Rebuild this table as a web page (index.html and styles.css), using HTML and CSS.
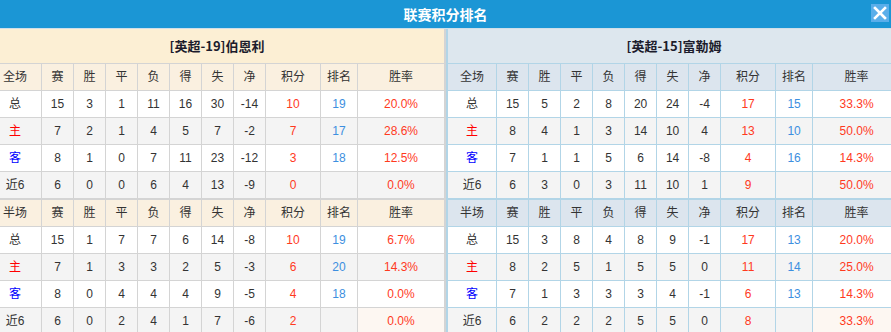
FILE: index.html
```html
<!DOCTYPE html>
<html lang="zh-CN">
<head>
<meta charset="utf-8">
<title>联赛积分排名</title>
<link rel="stylesheet" href="styles.css">
</head>
<body>
<div class="panel">
  <div class="titlebar">
    <span class="title">联赛积分排名</span>
    <span class="close" aria-label="关闭">
      <svg width="18" height="18" viewBox="0 0 18 18"><path d="M4 4 L14 14 M14 4 L4 14" stroke="#fff" stroke-width="2.6" stroke-linecap="square" fill="none"/></svg>
    </span>
  </div>
  <div class="tables">
    <table class="standings home">
      <colgroup><col class="c-label"><col class="c-num"><col class="c-num"><col class="c-num"><col class="c-num"><col class="c-num"><col class="c-num"><col class="c-num"><col class="c-pts"><col class="c-rank"><col class="c-rate"></colgroup>
      <tr class="team-row"><th colspan="11" class="team">[英超-19]伯恩利</th></tr>
      <tr class="head"><th>全场</th><th>赛</th><th>胜</th><th>平</th><th>负</th><th>得</th><th>失</th><th>净</th><th>积分</th><th>排名</th><th>胜率</th></tr>
      <tr><td>总</td><td>15</td><td>3</td><td>1</td><td>11</td><td>16</td><td>30</td><td>-14</td><td class="pts">10</td><td class="rank">19</td><td class="rate">20.0%</td></tr>
      <tr class="alt"><td class="h">主</td><td>7</td><td>2</td><td>1</td><td>4</td><td>5</td><td>7</td><td>-2</td><td class="pts">7</td><td class="rank">17</td><td class="rate">28.6%</td></tr>
      <tr><td class="a">客</td><td>8</td><td>1</td><td>0</td><td>7</td><td>11</td><td>23</td><td>-12</td><td class="pts">3</td><td class="rank">18</td><td class="rate">12.5%</td></tr>
      <tr class="alt"><td>近6</td><td>6</td><td>0</td><td>0</td><td>6</td><td>4</td><td>13</td><td>-9</td><td class="pts">0</td><td class="rank"></td><td class="rate">0.0%</td></tr>
      <tr class="head sec"><th>半场</th><th>赛</th><th>胜</th><th>平</th><th>负</th><th>得</th><th>失</th><th>净</th><th>积分</th><th>排名</th><th>胜率</th></tr>
      <tr><td>总</td><td>15</td><td>1</td><td>7</td><td>7</td><td>6</td><td>14</td><td>-8</td><td class="pts">10</td><td class="rank">19</td><td class="rate">6.7%</td></tr>
      <tr class="alt"><td class="h">主</td><td>7</td><td>1</td><td>3</td><td>3</td><td>2</td><td>5</td><td>-3</td><td class="pts">6</td><td class="rank">20</td><td class="rate">14.3%</td></tr>
      <tr><td class="a">客</td><td>8</td><td>0</td><td>4</td><td>4</td><td>4</td><td>9</td><td>-5</td><td class="pts">4</td><td class="rank">18</td><td class="rate">0.0%</td></tr>
      <tr class="alt"><td>近6</td><td>6</td><td>0</td><td>2</td><td>4</td><td>1</td><td>7</td><td>-6</td><td class="pts">2</td><td class="rank"></td><td class="rate hl">0.0%</td></tr>
    </table>
    <table class="standings away">
      <colgroup><col class="c-label2"><col class="c-num"><col class="c-num"><col class="c-num"><col class="c-num"><col class="c-num"><col class="c-num"><col class="c-num"><col class="c-pts"><col class="c-rank"><col class="c-rate"></colgroup>
      <tr class="team-row"><th colspan="11" class="team">[英超-15]富勒姆</th></tr>
      <tr class="head"><th>全场</th><th>赛</th><th>胜</th><th>平</th><th>负</th><th>得</th><th>失</th><th>净</th><th>积分</th><th>排名</th><th>胜率</th></tr>
      <tr><td>总</td><td>15</td><td>5</td><td>2</td><td>8</td><td>20</td><td>24</td><td>-4</td><td class="pts">17</td><td class="rank">15</td><td class="rate">33.3%</td></tr>
      <tr class="alt"><td class="h">主</td><td>8</td><td>4</td><td>1</td><td>3</td><td>14</td><td>10</td><td>4</td><td class="pts">13</td><td class="rank">10</td><td class="rate">50.0%</td></tr>
      <tr><td class="a">客</td><td>7</td><td>1</td><td>1</td><td>5</td><td>6</td><td>14</td><td>-8</td><td class="pts">4</td><td class="rank">16</td><td class="rate">14.3%</td></tr>
      <tr class="alt"><td>近6</td><td>6</td><td>3</td><td>0</td><td>3</td><td>11</td><td>10</td><td>1</td><td class="pts">9</td><td class="rank"></td><td class="rate">50.0%</td></tr>
      <tr class="head sec"><th>半场</th><th>赛</th><th>胜</th><th>平</th><th>负</th><th>得</th><th>失</th><th>净</th><th>积分</th><th>排名</th><th>胜率</th></tr>
      <tr><td>总</td><td>15</td><td>3</td><td>8</td><td>4</td><td>8</td><td>9</td><td>-1</td><td class="pts">17</td><td class="rank">13</td><td class="rate">20.0%</td></tr>
      <tr class="alt"><td class="h">主</td><td>8</td><td>2</td><td>5</td><td>1</td><td>5</td><td>5</td><td>0</td><td class="pts">11</td><td class="rank">14</td><td class="rate">25.0%</td></tr>
      <tr><td class="a">客</td><td>7</td><td>1</td><td>3</td><td>3</td><td>3</td><td>4</td><td>-1</td><td class="pts">6</td><td class="rank">13</td><td class="rate">14.3%</td></tr>
      <tr class="alt"><td>近6</td><td>6</td><td>2</td><td>2</td><td>2</td><td>5</td><td>5</td><td>0</td><td class="pts">8</td><td class="rank"></td><td class="rate hl">33.3%</td></tr>
    </table>
  </div>
</div>
</body>
</html>
```
FILE: styles.css
```css
html, body {
  margin: 0;
  padding: 0;
  background: #fff;
  overflow: hidden;
}
body {
  font-family: "Liberation Sans", "Noto Sans CJK SC", sans-serif;
  font-size: 12px;
  color: #333;
}
.panel {
  width: 891px;
  overflow: hidden;
}
.titlebar {
  position: relative;
  height: 28px;
  background: #1b96d5;
  border-bottom: 1px solid #cfdfe9;
  display: flex;
  align-items: center;
  justify-content: center;
}
.title {
  color: #fff;
  font-weight: bold;
  font-size: 14px;
  font-family: "Noto Sans CJK SC", sans-serif;
  line-height: 28px;
}
.close {
  position: absolute;
  right: 2px;
  top: 4px;
  width: 18px;
  height: 18px;
  background: #5aaeea;
  display: block;
}
.close svg { display: block; }
.tables {
  display: flex;
  width: 901px;
}
.standings {
  border-collapse: separate;
  border-spacing: 0;
  table-layout: fixed;
  flex: none;
}
.home { width: 446px; }
.away { width: 455px; }
.c-label { width: 42px; }
.c-label2 { width: 51px; }
.c-num { width: 32px; }
.c-pts { width: 55px; }
.c-rank { width: 37px; }
.c-rate { width: 88px; }
.standings th, .standings td {
  padding: 0;
  text-align: center;
  font-weight: normal;
  white-space: nowrap;
  border-right: 1px solid #d4d4d4;
  border-bottom: 1px solid #d4d4d4;
  line-height: 16px;
}
.standings tr { height: 27px; }
.standings .team-row { height: 35px; }
.standings th.team {
  font-weight: bold;
  font-size: 13px;
  color: #1c1c2c;
  font-family: "Noto Sans CJK SC", sans-serif;
}
.home .team-row th { background: #fcefd4; padding-right: 10px; }
.home .head th { background: #faf0e0; color: #333; }
.home tr > :last-child { border-right-width: 2px; }
.home tr:not(.team-row) > :first-child { padding-right: 11px; }
.away th, .away td { border-color: #b2d5e7; }
.away tr > :first-child { border-left: 2px solid #b2d5e7; }
.away .team-row th { background: #dde7ee; }
.away .head th { background: #dce5ee; color: #333; }
.standings .head.sec th { border-top: 1px solid #d4d4d4; }
.away .head.sec th { border-top-color: #b2d5e7; }
.standings .head.sec { height: 28px; }
.alt td { background: #f4f4f4; }
.standings td.hl { background: #fdf7f2; }
td.h { color: #f00; }
td.a { color: #00f; }
td.pts { color: #ff3a1e; }
td.rank { color: #3d8fe0; }
td.rate { color: #ff3a1e; }
```
